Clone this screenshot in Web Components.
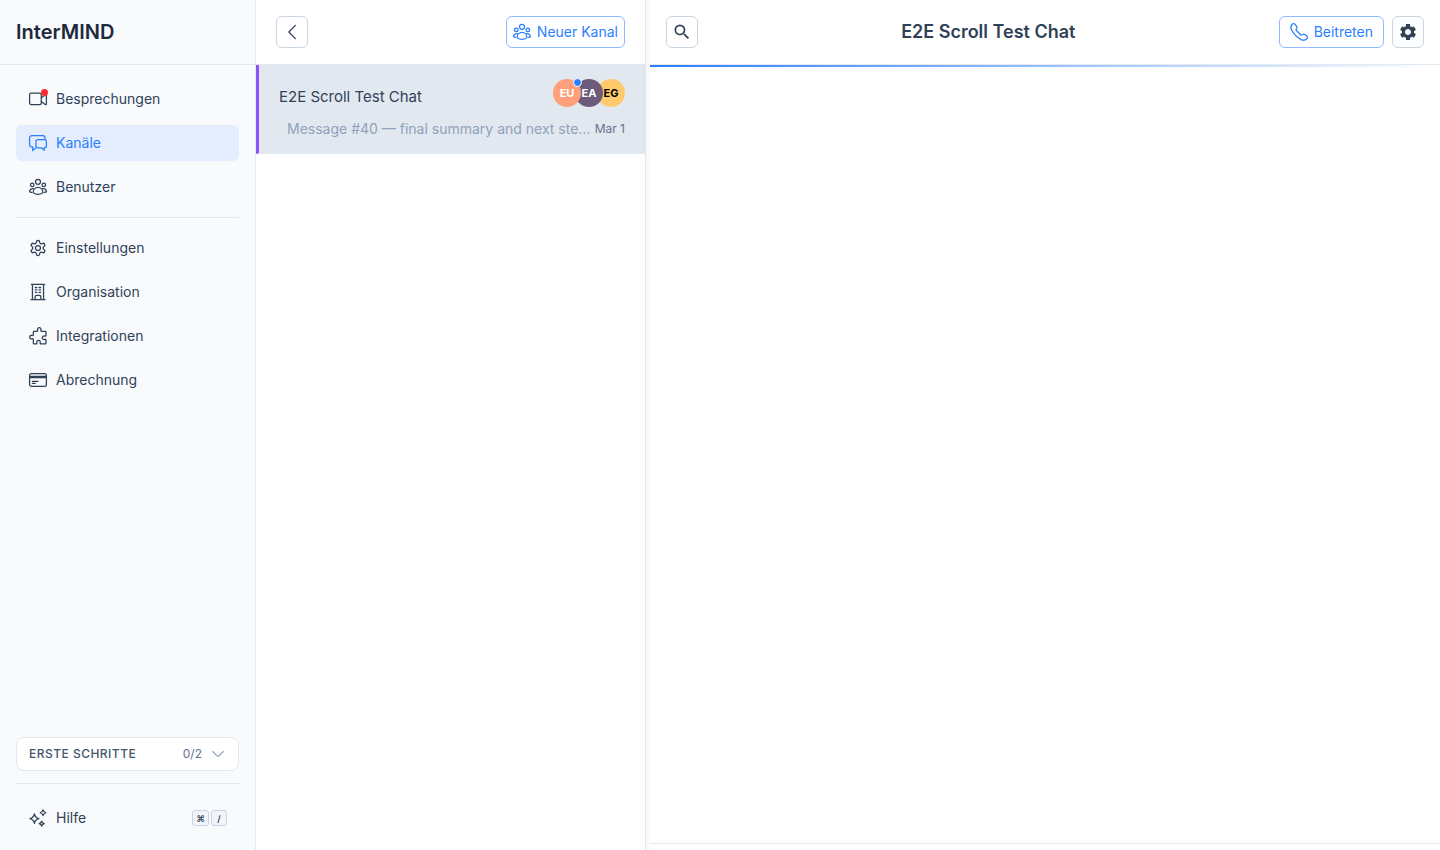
<!DOCTYPE html>
<html lang="de">
<head>
<meta charset="utf-8">
<meta name="viewport" content="width=device-width, initial-scale=1">
<title>InterMIND</title>
<style>
    :root {
        --color-text: #314158;
        --color-strong: #1d293d;
        --color-muted: #62748e;
        --color-faint: #90a1b9;
        --color-line: #e2e8f0;
        --color-control: #cad5e2;
        --color-surface: #f8fafc;
        --color-primary: #2b7fff;
        --color-primary-line: #8ebbff;
    }

    body {
        margin: 0;
        background: #fff;
        color: var(--color-text);
        font: 400 14px/20px Inter, "Liberation Sans", sans-serif;
    }
</style>
</head>
<body>
<im-app></im-app>

<script>
const ICONS = {
    video: `<rect x=".8" y="4.2" width="15.6" height="15.4" rx="2.4"/><path d="M16.4 10.2l5.2-3.6c.7-.5 1.6 0 1.6.8v11.2c0 .8-.9 1.3-1.6.8l-5.2-4"/>`,
    channels: `<path d="M5 22.2v-4.900H3.900A3.100 3.100 0 0 1 .8 14.100V5.200a3.100 3.100 0 0 1 3.100-3.100h14.400a3.100 3.100 0 0 1 3.100 3.100v1.500M5 22.200l3.600-3.300"/><path d="M12 7.600h8.400a2.800 2.800 0 0 1 2.800 2.800v5.200a2.800 2.800 0 0 1-2.800 2.800h-.2v3.200l-3.500-3.200H12a2.800 2.800 0 0 1-2.800-2.800v-5.200A2.800 2.800 0 0 1 12 7.600z"/>`,
    users: `<circle cx="12" cy="5.1" r="3.300"/><circle cx="4.300" cy="9.200" r="2.400"/><circle cx="19.700" cy="9.200" r="2.400"/><path d="M5.400 19.600c.1-4 2.900-7 6.600-7s6.500 3 6.600 7c-3.800 2.600-9.400 2.600-13.200 0zM5.700 14.300c-2.600-.9-4.900 1-4.900 4.100.7.500 1.500.7 2.500.8M18.300 14.300c2.600-.9 4.900 1 4.900 4.100-.7.500-1.500.7-2.500.8"/>`,
    settings: `<circle cx="12" cy="12" r="3.300"/><path d="M12.220 2h-.44a2 2 0 0 0-2 2v.18a2 2 0 0 1-1 1.730l-.43.25a2 2 0 0 1-2 0l-.15-.08a2 2 0 0 0-2.730.73l-.22.38a2 2 0 0 0 .73 2.730l.15.1a2 2 0 0 1 1 1.720v.51a2 2 0 0 1-1 1.740l-.15.09a2 2 0 0 0-.73 2.730l.22.38a2 2 0 0 0 2.730.73l.15-.08a2 2 0 0 1 2 0l.43.25a2 2 0 0 1 1 1.730V20a2 2 0 0 0 2 2h.44a2 2 0 0 0 2-2v-.18a2 2 0 0 1 1-1.730l.43-.25a2 2 0 0 1 2 0l.15.08a2 2 0 0 0 2.730-.73l.22-.39a2 2 0 0 0-.73-2.730l-.15-.08a2 2 0 0 1-1-1.740v-.5a2 2 0 0 1 1-1.740l.15-.09a2 2 0 0 0 .73-2.730l-.22-.38a2 2 0 0 0-2.730-.73l-.15.08a2 2 0 0 1-2 0l-.43-.25a2 2 0 0 1-1-1.730V4a2 2 0 0 0-2-2z"/>`,
    building: `<path d="M3 1.800h18M2.600 22.200h18.800M4.600 1.800v20.400M19.400 1.800v20.400M8.200 22.200v-3.600c0-1.200.8-2 2-2h3.600c1.200 0 2 .8 2 2v3.600"/><path d="M8.500 6h2M13.500 6h2M8.500 9.300h2M13.500 9.300h2M8.500 12.600h2M13.500 12.600h2"/>`,
    puzzle: `<path d="M22.600 9.800v-3a1 1 0 0 0-1-1h-4.800c-.8 0-1.200-.8-.9-1.500a2.400 2.400 0 1 0-4.400 0c.3.7-.1 1.500-.9 1.500H6.800a1 1 0 0 0-1 1v3.600c0 .8-.8 1.200-1.500.9a2.400 2.400 0 1 0 0 4.400c.7-.3 1.500.1 1.500.9v5a1 1 0 0 0 1 1h2.800c.8 0 1.200-.7.9-1.400a2.400 2.400 0 1 1 4.400 0c-.3.7.1 1.400.9 1.400h5.800a1 1 0 0 0 1-1v-4.200c0-.8-.8-1.200-1.500-.9a2.400 2.400 0 1 1 0-4.400c.7.3 1.500-.1 1.500-.9z"/>`,
    card: `<rect x=".8" y="3.400" width="22.400" height="17.200" rx="2.500"/><path d="M.8 7.100h22.400M.8 8.900h22.400M4.500 13.700h7.500M4.500 16.600h3.800"/>`,
    sparkles: `<path d="M7.200 6.500c.8 4.200 2 5.500 6 6.300-4 .8-5.200 2.100-6 6.300-.8-4.200-2-5.500-6-6.300 4-.8 5.200-2.100 6-6.300zM18.700 1.200c.6 2.500 1.300 3.200 3.800 3.800-2.500.6-3.200 1.300-3.800 3.800-.6-2.500-1.300-3.200-3.800-3.800 2.500-.6 3.200-1.300 3.800-3.800zM16.900 16.200c.5 2.200 1.100 2.800 3.300 3.300-2.200.5-2.800 1.100-3.300 3.300-.5-2.200-1.100-2.800-3.300-3.300 2.200-.5 2.800-1.100 3.300-3.300z"/>`,
    phone: `<path d="M14.900 22.100a7 7 0 0 0 7.600-1.100 2.400 2.400 0 0 0 .3-3.300l-3-2.300a2.400 2.400 0 0 0-3 .1c-.9.8-1.800.9-2.700.1l-5.500-5.500c-.8-.9-.7-1.800.1-2.700a2.400 2.400 0 0 0 .1-3L6.500 1.500a2.400 2.400 0 0 0-3.600 0 7 7 0 0 0-.9 7.600c2.800 5.600 7.300 10.200 12.900 13z"/>`,
    back: `<path d="M16.500 3.200L7.800 12l8.700 8.800"/>`,
    down: `<path d="M4 8.300l8 7.600 8-7.600"/>`,
    search: `<path fill="currentColor" stroke="none" d="M15.500 14h-.79l-.28-.27A6.471 6.471 0 0 0 16 9.500 6.500 6.500 0 1 0 9.500 16c1.610 0 3.090-.59 4.230-1.570l.27.28v.79l5 4.990L20.490 19l-4.990-5zm-6 0C7.010 14 5 11.990 5 9.500S7.010 5 9.500 5 14 7.010 14 9.500 11.990 14 9.500 14z"/>`,
    gear: `<path fill="currentColor" stroke="none" d="M19.140 12.940c.04-.3.06-.61.06-.94 0-.32-.02-.64-.07-.94l2.030-1.580a.49.49 0 0 0 .12-.61l-1.920-3.320a.488.488 0 0 0-.59-.22l-2.390.96c-.5-.38-1.030-.7-1.620-.94l-.36-2.540a.484.484 0 0 0-.48-.41h-3.840c-.24 0-.43.17-.47.41l-.36 2.540c-.59.24-1.130.57-1.620.94l-2.390-.96c-.22-.08-.47 0-.59.22L2.740 8.870c-.12.21-.08.47.12.61l2.030 1.580c-.05.3-.09.63-.09.94s.02.64.07.94l-2.030 1.580a.49.49 0 0 0-.12.61l1.920 3.320c.12.22.37.29.59.22l2.390-.96c.5.38 1.030.7 1.620.94l.36 2.540c.05.24.24.41.48.41h3.840c.24 0 .44-.17.47-.41l.36-2.540c.59-.24 1.130-.56 1.620-.94l2.390.96c.22.08.47 0 .59-.22l1.920-3.320c.12-.22.07-.47-.12-.61l-2.010-1.580zM12 15.600c-1.980 0-3.600-1.620-3.600-3.600s1.620-3.600 3.600-3.600 3.600 1.620 3.600 3.600-1.620 3.600-3.600 3.600z"/>`
};

class Icon extends HTMLElement {
    constructor() {
        super();
        this.attachShadow({ mode: 'open' });
    }

    connectedCallback() {
        this.shadowRoot.innerHTML = `
        <style>
            :host {
                display: block;
                flex: none;
                width: var(--icon-size, 18px);
                height: var(--icon-size, 18px);
            }

            svg {
                display: block;
                width: 100%;
                height: 100%;
                overflow: visible;
            }
        </style>
        <svg viewBox="0 0 24 24" fill="none" stroke="currentColor" stroke-width="1.7" stroke-linecap="round" stroke-linejoin="round" aria-hidden="true">${ICONS[this.getAttribute('name')]}</svg>`;
    }
}

class NavItem extends HTMLElement {
    constructor() {
        super();
        this.attachShadow({ mode: 'open' });
    }

    connectedCallback() {
        this.shadowRoot.innerHTML = `
        <style>
            :host {
                display: block;
            }

            a {
                display: flex;
                align-items: center;
                gap: 9px;
                height: 36px;
                padding: 0 12px 0 13px;
                border-radius: 6px;
                color: inherit;
                text-decoration: none;
            }

            :host([active]) a {
                background: #e3edfd;
                color: var(--color-primary);
            }

            .icon {
                position: relative;
            }

            :host([alert]) .icon::after {
                content: "";
                position: absolute;
                top: -1px;
                right: -1px;
                width: 7px;
                height: 7px;
                border-radius: 50%;
                background: #fb2c36;
            }

            .label {
                flex: 1;
            }
        </style>
        <a href="#${this.getAttribute('icon')}">
            <span class="icon"><im-icon name="${this.getAttribute('icon')}"></im-icon></span>
            <span class="label"><slot></slot></span>
            <slot name="end"></slot>
        </a>`;

        if (this.hasAttribute('active')) {
            this.shadowRoot.querySelector('a').setAttribute('aria-current', 'page');
        }
    }
}

//Outlined button, square unless it gets text through the slot
class OutlineButton extends HTMLElement {
    constructor() {
        super();
        this.attachShadow({ mode: 'open' });
    }

    connectedCallback() {
        this.shadowRoot.innerHTML = `
        <style>
            :host {
                display: block;
                flex: none;
            }

            button {
                display: flex;
                align-items: center;
                justify-content: center;
                gap: 6px;
                min-width: 32px;
                height: 32px;
                margin: 0;
                padding: 0 var(--button-pad, 0);
                border: 1px solid var(--color-control);
                border-radius: 6px;
                background: #fff;
                color: inherit;
                font: inherit;
                white-space: nowrap;
                cursor: pointer;
            }

            :host([primary]) button {
                border-color: var(--color-primary-line);
                color: var(--color-primary);
            }
        </style>
        <button type="button"><im-icon name="${this.getAttribute('icon')}"></im-icon><slot></slot></button>`;

        if (this.hasAttribute('label')) {
            this.shadowRoot.querySelector('button').setAttribute('aria-label', this.getAttribute('label'));
        }
    }
}

class Avatar extends HTMLElement {
    constructor() {
        super();
        this.attachShadow({ mode: 'open' });
        this.shadowRoot.innerHTML = `
        <style>
            :host {
                position: relative;
                display: grid;
                place-items: center;
                width: 28px;
                height: 28px;
                border-radius: 50%;
                color: #fff;
                font-size: 11px;
                font-weight: 700;
                line-height: 16px;
            }

            :host([online])::after {
                content: "";
                position: absolute;
                top: -1px;
                right: -1px;
                width: 7px;
                height: 7px;
                border: 1px solid #fff;
                border-radius: 50%;
                background: var(--color-primary);
            }
        </style>
        <slot></slot>`;
    }
}

class Sidebar extends HTMLElement {
    constructor() {
        super();
        this.attachShadow({ mode: 'open' });
        this.shadowRoot.innerHTML = `
        <style>
            :host {
                display: flex;
                flex-direction: column;
                box-sizing: border-box;
                border-right: 1px solid var(--color-line);
                background: var(--color-surface);
            }

            header {
                display: flex;
                align-items: center;
                height: 64px;
                padding: 0 16px;
                border-bottom: 1px solid var(--color-line);
                color: var(--color-strong);
                font-size: 20px;
                font-weight: 600;
                line-height: 28px;
            }

            nav {
                flex: 1;
                display: flex;
                flex-direction: column;
                gap: 8px;
                padding: 16px;
            }

            hr {
                width: 100%;
                height: 1px;
                margin: 4px 0;
                border: 0;
                background: var(--color-line);
            }

            footer {
                padding: 0 16px 14px;
            }

            footer hr {
                margin: 12px 0 16px;
            }

            .steps {
                display: flex;
                align-items: center;
                width: 100%;
                height: 34px;
                padding: 0 12px;
                border: 1px solid var(--color-line);
                border-radius: 8px;
                background: #fff;
                color: #45556c;
                font: inherit;
                font-size: 12px;
                font-weight: 500;
                letter-spacing: 0.04em;
                cursor: pointer;
            }

            .steps .count {
                margin-left: auto;
                margin-right: 8px;
                color: var(--color-muted);
                font-weight: 400;
                letter-spacing: normal;
            }

            .steps im-icon {
                --icon-size: 16px;
                color: var(--color-faint);
            }

            .keys {
                display: flex;
                gap: 2px;
            }

            kbd {
                box-sizing: border-box;
                min-width: 16px;
                height: 16px;
                padding: 0 3px;
                border: 1px solid var(--color-control);
                border-radius: 3px;
                background: #f1f5f9;
                font: 600 9px/15px Inter, "DejaVu Sans", sans-serif;
                text-align: center;
            }
        </style>
        <header>InterMIND</header>
        <nav>
            <im-nav-item icon="video" alert>Besprechungen</im-nav-item>
            <im-nav-item icon="channels" active>Kanäle</im-nav-item>
            <im-nav-item icon="users">Benutzer</im-nav-item>
            <hr>
            <im-nav-item icon="settings">Einstellungen</im-nav-item>
            <im-nav-item icon="building">Organisation</im-nav-item>
            <im-nav-item icon="puzzle">Integrationen</im-nav-item>
            <im-nav-item icon="card">Abrechnung</im-nav-item>
        </nav>
        <footer>
            <button class="steps" type="button" aria-expanded="false">
                <span>ERSTE SCHRITTE</span>
                <span class="count">0/2</span>
                <im-icon name="down"></im-icon>
            </button>
            <hr>
            <im-nav-item icon="sparkles">Hilfe<span class="keys" slot="end"><kbd>⌘</kbd><kbd>/</kbd></span></im-nav-item>
        </footer>`;
    }
}

class ChannelItem extends HTMLElement {
    constructor() {
        super();
        this.attachShadow({ mode: 'open' });
        this.shadowRoot.innerHTML = `
        <style>
            :host {
                display: block;
            }

            a {
                display: grid;
                gap: 12px;
                padding: 14px 20px;
                border-left: 3px solid transparent;
                border-bottom: 1px solid var(--color-line);
                color: inherit;
                text-decoration: none;
            }

            :host([selected]) a {
                border-left-color: #8e51ff;
                background: var(--color-line);
            }

            .row {
                display: flex;
                align-items: flex-end;
                justify-content: space-between;
                gap: 4px;
                min-width: 0;
            }

            .title {
                font-size: 15px;
            }

            .people {
                display: flex;
            }

            ::slotted(im-avatar:not(:last-of-type)) {
                margin-right: -6px;
            }

            .message {
                flex: 1;
                min-width: 0;
                padding-left: 8px;
                overflow: hidden;
                color: var(--color-faint);
                text-overflow: ellipsis;
                white-space: nowrap;
            }

            .date {
                color: var(--color-muted);
                font-size: 12px;
            }
        </style>
        <a href="#channel">
            <div class="row">
                <span class="title"><slot name="title"></slot></span>
                <span class="people"><slot name="people"></slot></span>
            </div>
            <div class="row">
                <span class="message"><slot></slot></span>
                <span class="date"><slot name="date"></slot></span>
            </div>
        </a>`;
    }
}

class ChannelList extends HTMLElement {
    constructor() {
        super();
        this.attachShadow({ mode: 'open' });
        this.shadowRoot.innerHTML = `
        <style>
            :host {
                display: block;
                box-sizing: border-box;
                border-right: 1px solid var(--color-line);
            }

            header {
                display: flex;
                align-items: center;
                justify-content: space-between;
                height: 64px;
                padding: 0 20px;
                border-bottom: 1px solid var(--color-line);
            }

            im-button[primary] {
                --button-pad: 6px;
            }
        </style>
        <header>
            <im-button icon="back" label="Zurück"></im-button>
            <im-button icon="users" primary>Neuer Kanal</im-button>
        </header>
        <im-channel-item selected>
            <span slot="title">E2E Scroll Test Chat</span>
            <im-avatar slot="people" online style="background: #ffa07a; z-index: 3">EU</im-avatar>
            <im-avatar slot="people" style="background: #6c5b7b; z-index: 2">EA</im-avatar>
            <im-avatar slot="people" style="background: #feca6b; color: #000; z-index: 1">EG</im-avatar>
            Message #40 — final summary and next steps
            <span slot="date">Mar 1</span>
        </im-channel-item>`;
    }
}

class Chat extends HTMLElement {
    constructor() {
        super();
        this.attachShadow({ mode: 'open' });
        this.shadowRoot.innerHTML = `
        <style>
            :host {
                display: flex;
                flex-direction: column;
                min-width: 0;
            }

            header {
                display: flex;
                align-items: center;
                gap: 8px;
                height: 64px;
                padding: 0 16px;
                border-bottom: 1px solid var(--color-line);
            }

            h1 {
                flex: 1;
                margin: 0;
                font-size: 18px;
                font-weight: 600;
                line-height: 28px;
                text-align: center;
            }

            .square {
                --icon-size: 20px;
            }

            im-button[primary] {
                --button-pad: 10px;
            }

            .loading {
                height: 2px;
                background: linear-gradient(to right, var(--color-primary), transparent);
            }

            main {
                flex: 1;
            }

            footer {
                height: 6px;
                border-top: 1px solid var(--color-line);
            }
        </style>
        <header>
            <im-button class="square" icon="search" label="Suchen"></im-button>
            <h1>E2E Scroll Test Chat</h1>
            <im-button icon="phone" primary>Beitreten</im-button>
            <im-button class="square" icon="gear" label="Kanaleinstellungen"></im-button>
        </header>
        <div class="loading"></div>
        <main></main>
        <footer></footer>`;
    }
}

class App extends HTMLElement {
    constructor() {
        super();
        this.attachShadow({ mode: 'open' });
        this.shadowRoot.innerHTML = `
        <style>
            :host {
                display: grid;
                grid-template-columns: 256px 390px 4px minmax(0, 1fr);
                min-height: 100vh;
            }

            .gutter {
                background: var(--color-surface);
            }
        </style>
        <im-sidebar></im-sidebar>
        <im-channel-list></im-channel-list>
        <div class="gutter"></div>
        <im-chat></im-chat>`;
    }
}

window.customElements.define('im-icon', Icon);
window.customElements.define('im-nav-item', NavItem);
window.customElements.define('im-button', OutlineButton);
window.customElements.define('im-avatar', Avatar);
window.customElements.define('im-channel-item', ChannelItem);
window.customElements.define('im-sidebar', Sidebar);
window.customElements.define('im-channel-list', ChannelList);
window.customElements.define('im-chat', Chat);
window.customElements.define('im-app', App);
</script>
</body>
</html>
